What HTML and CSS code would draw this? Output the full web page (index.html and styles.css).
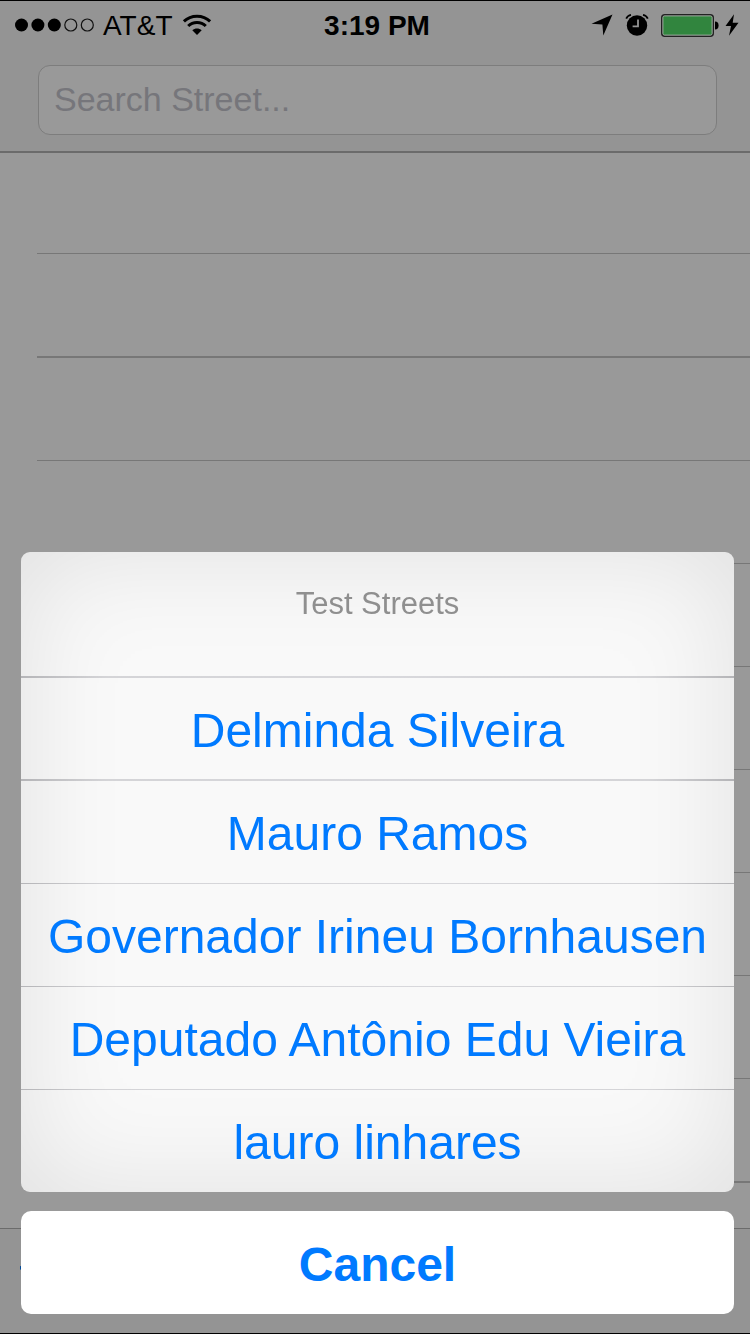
FILE: index.html
```html
<!DOCTYPE html>
<html lang="en">
<head>
<meta charset="utf-8">
<meta name="viewport" content="width=device-width, initial-scale=1">
<title>Search Street</title>
<link rel="stylesheet" href="styles.css">
</head>
<body class="screen">
<header class="header">
  <div class="status">
    <div class="status-left">
      <svg class="signal" width="80" height="14" viewBox="0 0 80 14" aria-label="Signal strength">
        <g fill="#000"><circle cx="6.5" cy="7" r="6.5"/><circle cx="22.9" cy="7" r="6.5"/><circle cx="39.3" cy="7" r="6.5"/></g>
        <g fill="none" stroke="#111" stroke-width="1.2"><circle cx="55.8" cy="7" r="6"/><circle cx="72.3" cy="7" r="6"/></g>
      </svg>
      <span class="carrier">AT&amp;T</span>
      <svg width="30" height="22" viewBox="0 0 30 22" aria-label="Wi-Fi">
        <g fill="none" stroke="#000" stroke-width="3">
          <path d="M1.9 7.4C9 .4 21 .4 28.1 7.4"/>
          <path d="M6.2 12C11 7.4 19 7.4 23.8 12"/>
        </g>
        <path d="M10.3 16.2C13 13.9 17 13.9 19.7 16.2L15 21Z"/>
      </svg>
    </div>
    <time class="clock">3:19 PM</time>
    <div class="status-right">
      <svg width="22" height="22" viewBox="0 0 22 22" aria-label="Location">
        <path d="M21.5.5L12.3 21.5L11.4 10.6L.5 9.8Z"/>
      </svg>
      <svg width="24" height="22" viewBox="0 0 24 22" aria-label="Alarm">
        <circle cx="12" cy="11.5" r="10.2"/>
        <path d="M1.2 4.6Q2.6 1.6 6 .9M22.8 4.6Q21.4 1.6 18 .9" fill="none" stroke="#000" stroke-width="1.8"/>
        <path d="M13 5.4V12.4H7.6" fill="none" stroke="#949494" stroke-width="1.8"/>
      </svg>
      <svg width="58" height="23" viewBox="0 0 58 23" aria-label="Battery charging">
        <rect x=".75" y=".75" width="51.5" height="21.5" rx="3" fill="none" stroke="#222" stroke-width="1.5"/>
        <rect x="2" y="2" width="49" height="19" rx="1.5" fill="#31853e" stroke="#9aa99c" stroke-width=".8"/>
        <path d="M54 7.5Q57.6 7.5 57.6 11.5Q57.6 15.5 54 15.5Z"/>
      </svg>
      <svg width="14" height="22" viewBox="0 0 14 22" aria-hidden="true">
        <path d="M9 .3L.5 12H6L4 21.8L13.5 8.8H7.7Z"/>
      </svg>
    </div>
  </div>
  <input class="search" type="search" placeholder="Search Street..." aria-label="Search Street">
</header>

<main class="results">
  <ul class="rows">
    <li class="row"></li><li class="row row-strong"></li><li class="row"></li><li class="row"></li><li class="row"></li>
    <li class="row"></li><li class="row"></li><li class="row"></li><li class="row"></li><li class="row row-strong"></li>
  </ul>
</main>

<footer class="toolbar">
  <button class="tool" aria-label="Current location">
    <svg width="40" height="40" viewBox="0 0 40 40"><path d="M37 3L22 37L20 22L0 19Z" fill="none" stroke="#004a99" stroke-width="3"/></svg>
  </button>
</footer>

<div class="sheet" role="dialog" aria-labelledby="sheet-title">
  <div class="options">
    <h1 class="title" id="sheet-title">Test Streets</h1>
    <button class="option option-strong">Delminda Silveira</button>
    <button class="option option-strong">Mauro Ramos</button>
    <button class="option">Governador Irineu Bornhausen</button>
    <button class="option">Deputado Antônio Edu Vieira</button>
    <button class="option">lauro linhares</button>
  </div>
  <button class="cancel">Cancel</button>
</div>
</body>
</html>
```

FILE: styles.css
```css
* {
  box-sizing: border-box;
}

.screen {
  margin: 0;
  height: 100vh;
  display: flex;
  flex-direction: column;
  overflow: hidden;
  background: #999;
  border-top: 1px solid #000;
  border-bottom: 1px solid #000;
  font-family: "Liberation Sans", Arial, sans-serif;
}

.header {
  flex: none;
  background: #949494;
  border-bottom: 2px solid #6b6b6b;
  padding-bottom: 16px;
}

.status {
  display: grid;
  grid-template-columns: 1fr auto 1fr;
  align-items: center;
  height: 48px;
  padding: 0 11px 0 15px;
  font-size: 28px;
}

.status-left,
.status-right {
  display: flex;
  align-items: center;
  gap: 12px;
}

.status-left {
  gap: 8px;
}

.status-right {
  justify-content: flex-end;
}

.status-right svg:last-child {
  margin-left: -6px;
}

.carrier {
  padding-top: 1px;
  margin-right: 2px;
}

.clock {
  padding-top: 2px;
  font-weight: bold;
}

.search {
  display: block;
  width: calc(100% - 71px);
  height: 70px;
  margin: 16px 33px 0 38px;
  padding: 0 15px 2px;
  border: 1px solid #7d7d7d;
  border-radius: 12px;
  background: #999;
  color: #000;
  font: 34px "Liberation Sans", Arial, sans-serif;
  appearance: none;
  outline: none;
}

.search::placeholder {
  color: #76767b;
  opacity: 1;
}

.results {
  flex: 1;
  min-height: 0;
  overflow: hidden;
}

.rows {
  list-style: none;
  margin: 0;
  padding: 0 0 0 37px;
}

.row {
  height: 103px;
  border-bottom: 1px solid #777;
}

.row:first-child {
  height: 101px;
}

.row-strong {
  height: 104px;
  border-bottom-width: 2px;
}

.toolbar {
  flex: none;
  height: 105px;
  padding: 20px;
  background: #949494;
  border-top: 1px solid #6b6b6b;
}

.tool {
  padding: 0;
  border: 0;
  background: none;
}

.sheet {
  position: fixed;
  left: 21px;
  right: 16px;
  bottom: 20px;
  display: flex;
  flex-direction: column;
  gap: 19px;
}

.options {
  display: flex;
  flex-direction: column;
  overflow: hidden;
  border-radius: 9px;
  background: #f9f9f9;
  box-shadow: inset 0 0 110px rgba(0, 0, 0, 0.1);
}

.title {
  margin: 0;
  height: 124px;
  line-height: 104px;
  text-align: center;
  font-size: 31px;
  font-weight: normal;
  color: #8f8f8f;
}

.option,
.cancel {
  height: 103px;
  padding: 3px 0 0;
  border: 0;
  color: #007aff;
  font: 48px "Liberation Sans", Arial, sans-serif;
}

.option {
  border-top: 1px solid;
  border-image: linear-gradient(to right, #b4b4b7, #d4d4d7 12%, #d8d8dc 50%, #d4d4d7 88%, #b4b4b7) 1;
  border-left: 0;
  border-right: 0;
  border-bottom: 0;
  background: none;
}

.option-strong {
  border-top-width: 2px;
}

.option-strong + .option-strong {
  height: 104px;
}

.cancel {
  border-radius: 10px;
  background: #fff;
  font-weight: bold;
}
```
